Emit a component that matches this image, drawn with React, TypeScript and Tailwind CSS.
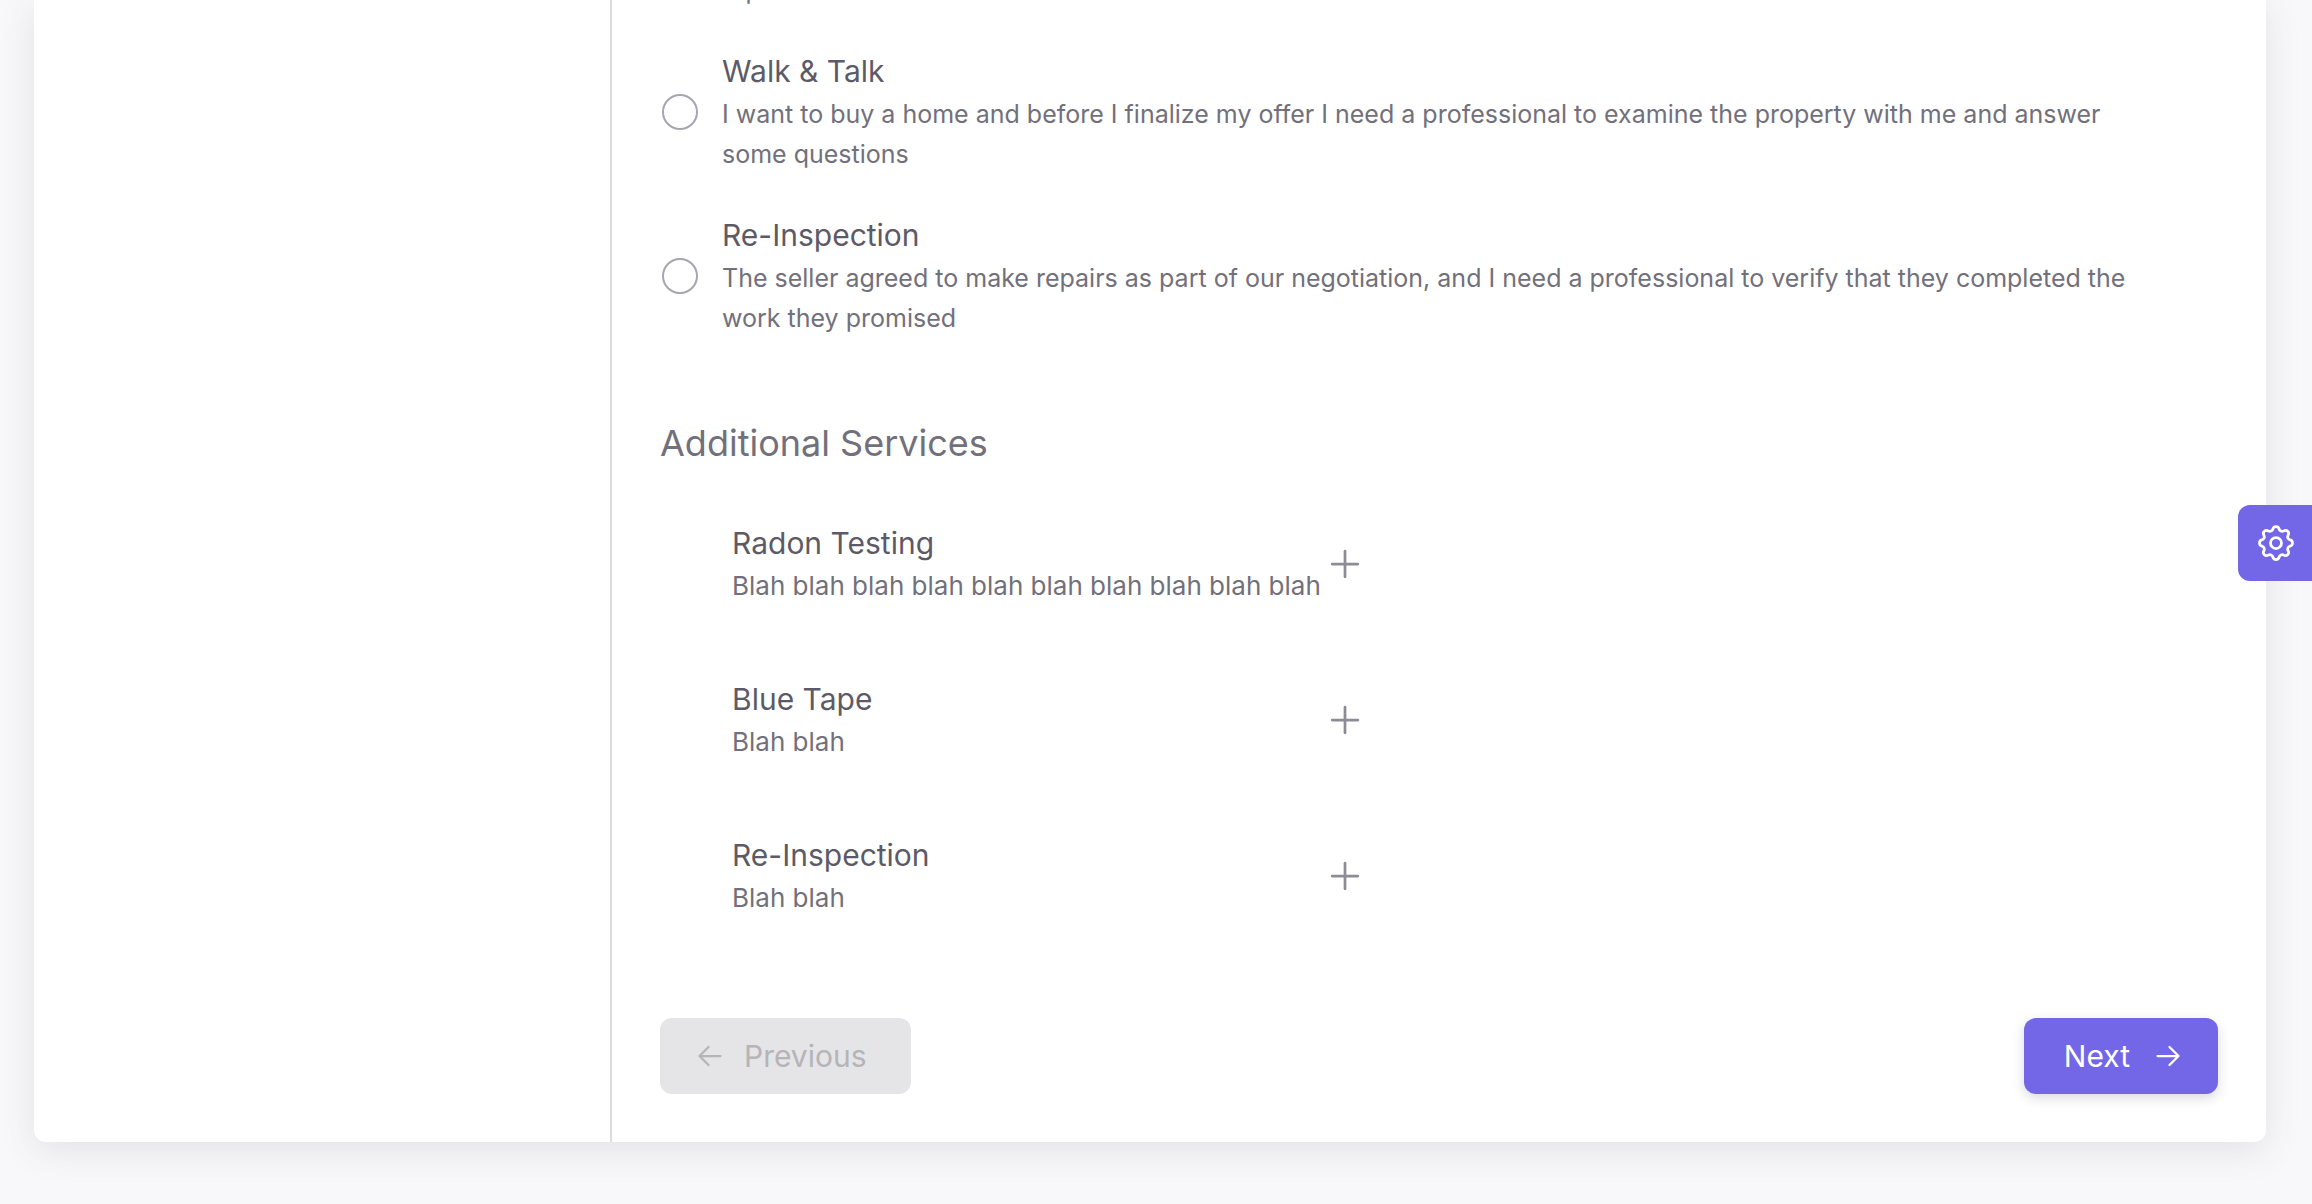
import { useId } from 'react';

const options = [
  {
    title: 'Walk & Talk',
    text: 'I want to buy a home and before I finalize my offer I need a professional to examine the property with me and answer some questions',
  },
  {
    title: 'Re-Inspection',
    text: 'The seller agreed to make repairs as part of our negotiation, and I need a professional to verify that they completed the work they promised',
  },
];

const services = [
  { title: 'Radon Testing', text: 'Blah blah blah blah blah blah blah blah blah blah' },
  { title: 'Blue Tape', text: 'Blah blah' },
  { title: 'Re-Inspection', text: 'Blah blah' },
];

function Icon({ size, children }: { size: string; children: React.ReactNode }) {
  return (
    <svg
      className={size}
      viewBox="0 0 24 24"
      fill="none"
      stroke="currentColor"
      strokeWidth="1.5"
      strokeLinecap="round"
      strokeLinejoin="round"
      aria-hidden="true"
    >
      {children}
    </svg>
  );
}

function Option({ title, text }: { title: string; text: string }) {
  const id = useId();
  return (
    <div className="flex items-center gap-6">
      <input
        id={id}
        type="radio"
        name="inspection"
        className="h-9 w-9 shrink-0 appearance-none rounded-full border-2 border-[#a7a5ad] bg-white checked:border-[10px] checked:border-[#7367e8]"
      />
      <label htmlFor={id} className="min-w-0 flex-1 pr-14">
        <span className="block text-[30px] leading-[45px] text-[#5d5a68]">{title}</span>
        <span className="block text-[25px] leading-[40px] text-[#72707b]">{text}</span>
      </label>
    </div>
  );
}

export default function App() {
  return (
    <div className="min-h-screen overflow-hidden bg-[#f8f8fa] pr-[46px] pb-[62px] pl-[34px] font-['Inter',sans-serif]">
      <main className="flex rounded-b-xl bg-white shadow-[0_8px_36px_rgba(75,70,92,0.12)]">
        <aside className="w-[578px] shrink-0 border-r-2 border-[#dcdbde]" />
        <form className="min-w-0 flex-1 p-12 pt-0" onSubmit={(e) => e.preventDefault()}>
          <div className="flex flex-col gap-[39px] pl-0.5">
            <div className="flex h-[10px] items-end overflow-hidden pl-[60px] text-[25px] leading-[40px] text-[#72707b]">
              report
            </div>
            {options.map((o) => (
              <Option key={o.title} {...o} />
            ))}
          </div>

          <h2 className="mt-[77px] text-4xl leading-[56px] text-[#72707b]">Additional Services</h2>

          <ul className="mt-[50px] flex flex-col gap-[71px] pl-[72px]">
            {services.map((s) => (
              <li key={s.title} className="flex items-center">
                <div className="w-[591px]">
                  <h3 className="text-[30px] leading-[45px] text-[#5d5a68]">{s.title}</h3>
                  <p className="text-[26px] leading-[40px] whitespace-nowrap text-[#72707b]">{s.text}</p>
                </div>
                <button type="button" aria-label={`Add ${s.title}`} className="text-[#8d8b95]">
                  <Icon size="size-11">
                    <path d="M12 5v14M5 12h14" />
                  </Icon>
                </button>
              </li>
            ))}
          </ul>

          <div className="mt-[100px] flex justify-between text-[30px] leading-[44px]">
            <button
              type="button"
              disabled
              className="flex items-center gap-4 rounded-xl bg-[#e5e5e7] py-4 pr-11 pl-8 text-[#b5b4b8]"
            >
              <Icon size="size-9">
                <path d="M5 12h14M5 12l6 6M5 12l6-6" />
              </Icon>
              Previous
            </button>
            <button
              type="submit"
              className="flex items-center gap-5 rounded-xl bg-[#7367e8] py-4 pr-8 pl-10 text-white shadow-[0_4px_12px_rgba(75,70,92,0.2)]"
            >
              Next
              <Icon size="size-9">
                <path d="M5 12h14M13 18l6-6M13 6l6 6" />
              </Icon>
            </button>
          </div>
        </form>
      </main>

      <button
        type="button"
        aria-label="Customize"
        className="fixed top-[505px] right-0 rounded-l-xl bg-[#7367e8] py-4 pr-[14px] pl-4 text-white"
      >
        <Icon size="size-11">
          <path d="M10.325 4.317c.426 -1.756 2.924 -1.756 3.35 0a1.724 1.724 0 0 0 2.573 1.066c1.543 -.94 3.31 .826 2.37 2.37a1.724 1.724 0 0 0 1.065 2.572c1.756 .426 1.756 2.924 0 3.35a1.724 1.724 0 0 0 -1.066 2.573c.94 1.543 -.826 3.31 -2.37 2.37a1.724 1.724 0 0 0 -2.572 1.065c-.426 1.756 -2.924 1.756 -3.35 0a1.724 1.724 0 0 0 -2.573 -1.066c-1.543 .94 -3.31 -.826 -2.37 -2.37a1.724 1.724 0 0 0 -1.065 -2.572c-1.756 -.426 -1.756 -2.924 0 -3.35a1.724 1.724 0 0 0 1.066 -2.573c-.94 -1.543 .826 -3.31 2.37 -2.37c1 .608 2.296 .07 2.572 -1.065z" />
          <circle cx="12" cy="12" r="3" />
        </Icon>
      </button>
    </div>
  );
}
